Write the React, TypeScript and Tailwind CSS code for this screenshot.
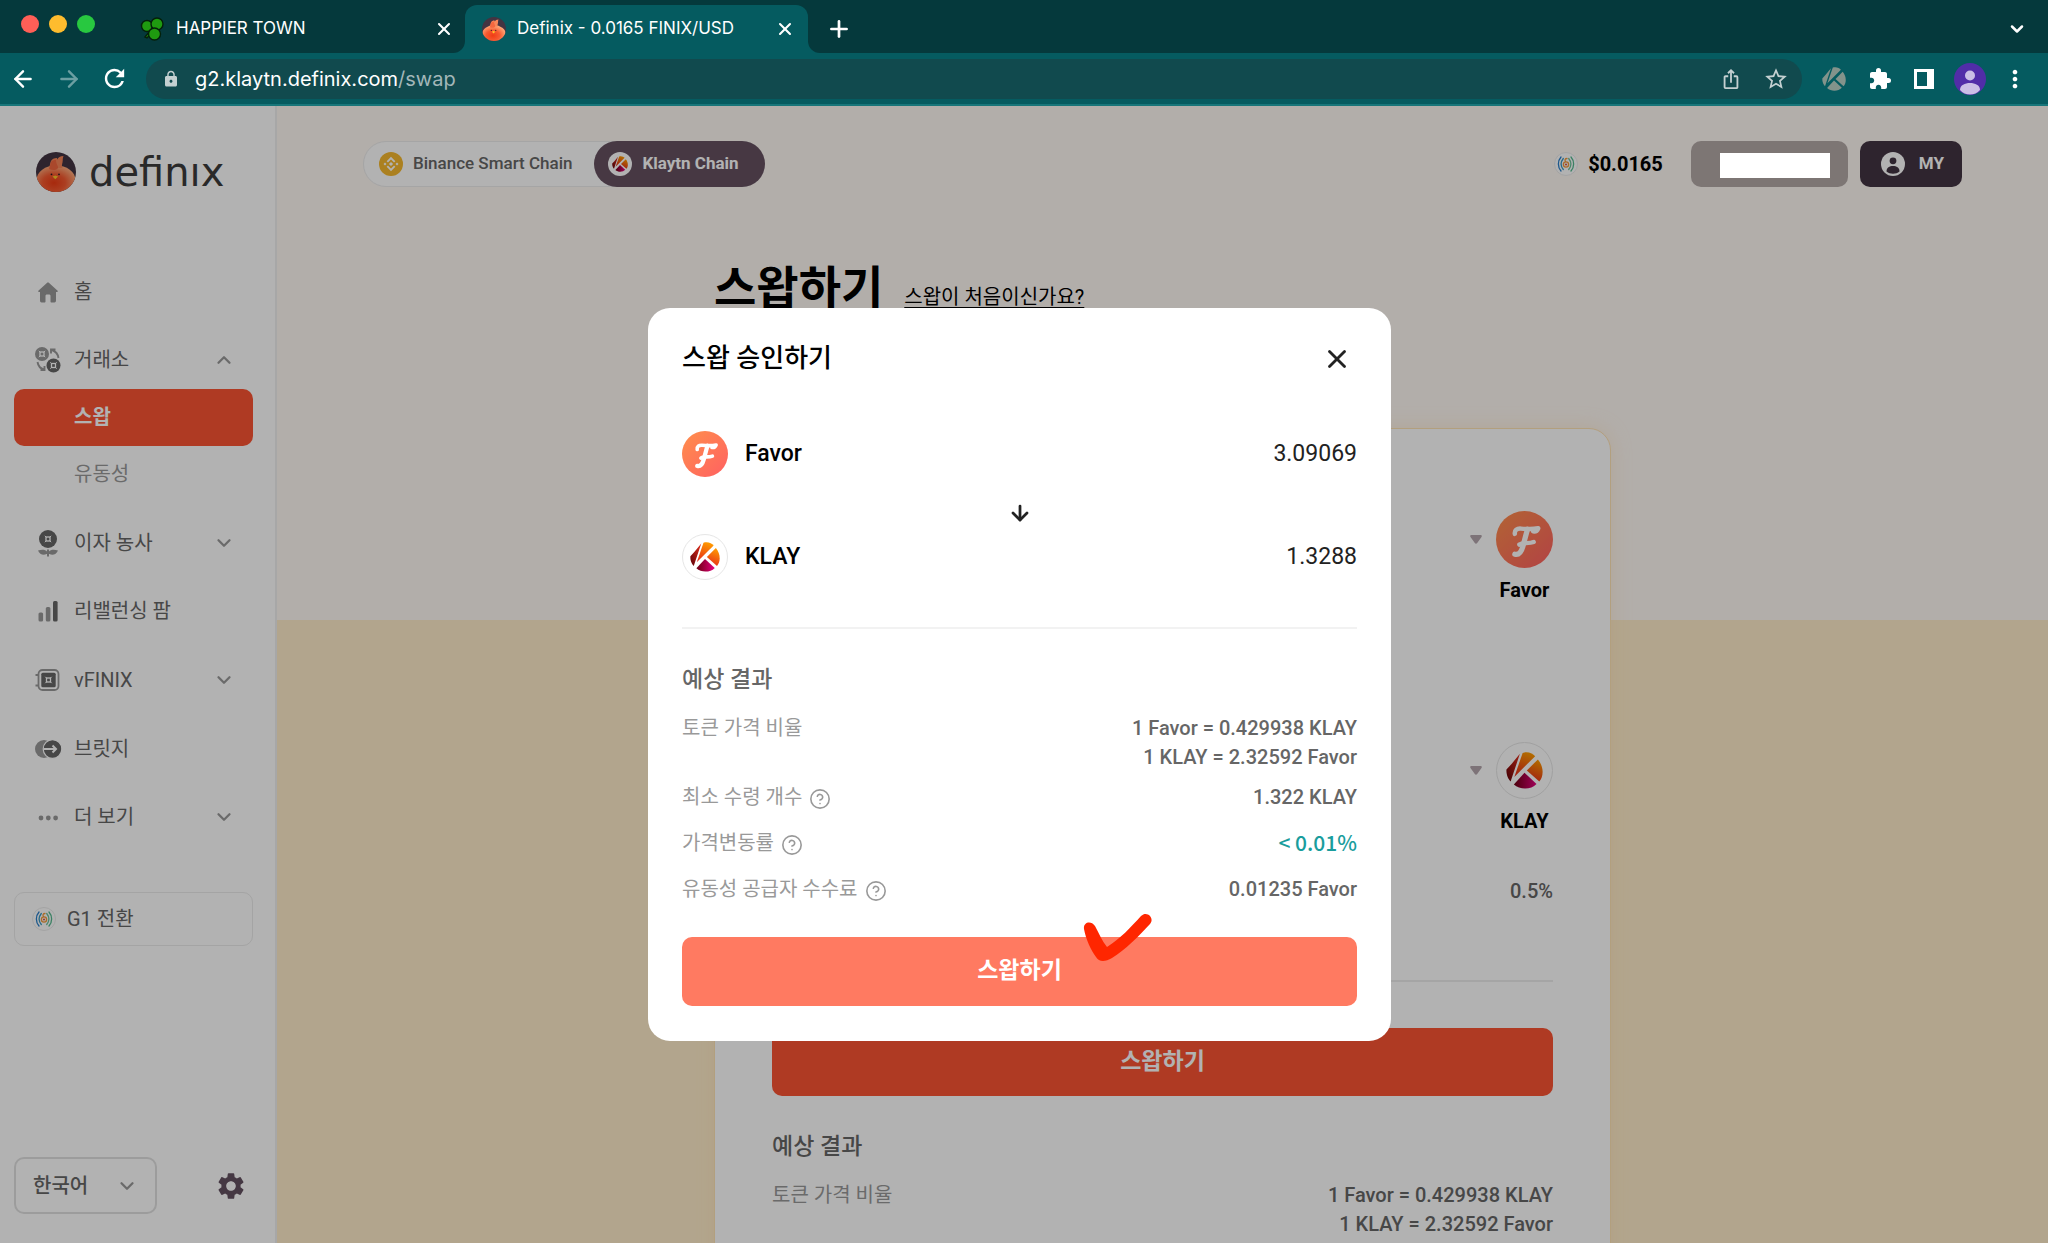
import { useId, useState } from "react";
import type { ReactNode } from "react";
import {
  ArrowDown,
  ArrowLeft,
  ArrowRight,
  ChevronDown,
  ChevronUp,
  CircleHelp,
  Plus,
  X,
} from "lucide-react";
import {
  MdExtension,
  MdLock,
  MdMoreVert,
  MdOutlineIosShare,
  MdRefresh,
  MdSettings,
  MdStarBorder,
} from "react-icons/md";

// Phoenix mark used in the sidebar and the browser tab
function FinixLogo({ className }: { className: string }) {
  const id = useId();
  return (
    <svg viewBox="0 0 40 40" className={className} aria-hidden="true">
      <defs>
        <clipPath id={`${id}c`}>
          <circle cx="20" cy="20" r="20" />
        </clipPath>
        <radialGradient id={`${id}g`} cx="0.45" cy="0.6" r="0.58">
          <stop offset="0" stopColor="#f03c14" />
          <stop offset="0.5" stopColor="#f65a30" />
          <stop offset="1" stopColor="#ffa878" />
        </radialGradient>
      </defs>
      <g clipPath={`url(#${id}c)`}>
        <rect width="40" height="40" fill="#433442" />
        <ellipse cx="20" cy="28" rx="19.500" ry="14.500" fill={`url(#${id}g)`} />
        <path
          d="M12.500 16c1.500-2 1.500-4.500 2.500-7 1-2 3-3 6-3 0 .5.200 1 .2 1.500C22.500 5.500 24 4 27.500 4c-1 2-.5 4-1 6.500-.5 2-1 4 0 5.500z"
          fill="#f88658"
        />
        <path d="M15 10c-1 3-1 5-2 7 4 2 8 1 9-1 .5-2-2-4-2-8-2 0-4 .5-5 2z" fill="#f4673f" />
      </g>
      <circle cx="15.500" cy="22.300" r="0.900" fill="#241a24" />
      <circle cx="23" cy="22.300" r="0.900" fill="#241a24" />
      <path d="M16.500 24.500l2.800-1 2.800 1-2.800 2.800z" fill="#ffc629" />
    </svg>
  );
}

function KlaytnMark({ className, muted = false }: { className: string; muted?: boolean }) {
  const id = useId();
  return (
    <svg viewBox="0 0 40 40" className={className} aria-hidden="true">
      <defs>
        <linearGradient id={`${id}l`} x1="0" y1="1" x2="1" y2="0">
          <stop offset="0" stopColor={muted ? "#83938b" : "#5e0008"} />
          <stop offset="1" stopColor={muted ? "#83938b" : "#e5301c"} />
        </linearGradient>
        <linearGradient id={`${id}r`} x1="0.6" y1="0" x2="0.3" y2="1">
          <stop offset="0" stopColor={muted ? "#83938b" : "#ff9a00"} />
          <stop offset="1" stopColor={muted ? "#83938b" : "#e62a1a"} />
        </linearGradient>
        <linearGradient id={`${id}b`} x1="0" y1="0" x2="1" y2="0">
          <stop offset="0" stopColor={muted ? "#83938b" : "#6d0010"} />
          <stop offset="1" stopColor={muted ? "#83938b" : "#e4007f"} />
        </linearGradient>
      </defs>
      <path d="M15 2L6 13 .500 19C0 25 3 30 5 32z" fill={`url(#${id}l)`} />
      <path d="M18 1C24-1 29 2 31.500 4.500L9 27z" fill={`url(#${id}r)`} />
      <path d="M34.500 8C41 16 41 26 36 32L22.500 20z" fill={`url(#${id}r)`} />
      <path d="M20 22.500L33 34.500C27 41 15 41 8.500 35z" fill={`url(#${id}b)`} />
    </svg>
  );
}

function FavorMark({ className }: { className: string }) {
  const id = useId();
  return (
    <svg viewBox="0 0 56 56" className={className} aria-hidden="true">
      <defs>
        <linearGradient id={`${id}f`} x1="0.1" y1="0.1" x2="0.85" y2="0.9">
          <stop offset="0" stopColor="#ff8a4e" />
          <stop offset="1" stopColor="#ff665f" />
        </linearGradient>
      </defs>
      <circle cx="28" cy="28" r="28" fill={`url(#${id}f)`} />
      <g fill="none" stroke="#fff" strokeWidth="4.400" strokeLinecap="round" strokeLinejoin="round">
        <path d="M18.500 22.500c-.5-3.500 2-5.500 6-5.200 6 .6 11 .9 17-.3-1 2.500-3 3.300-5 3" />
        <path d="M31 18c-1.500 5-3 11-4.500 16.500-1.300 5-3.500 9-8 8" strokeWidth="5.200" />
        <path d="M23 33c3-2.500 9-.5 14-2.500" />
      </g>
    </svg>
  );
}

function KlayToken({ className, mark }: { className: string; mark: string }) {
  return (
    <span className={`flex items-center justify-center rounded-full border border-[#e6e6e6] bg-white ${className}`}>
      <KlaytnMark className={mark} />
    </span>
  );
}

function BinanceMark() {
  return (
    <svg viewBox="0 0 24 24" className="size-6" aria-hidden="true">
      <circle cx="12" cy="12" r="12" fill="#f5b82e" />
      <g fill="none" stroke="#fff" strokeWidth="1.900">
        <path d="M8.300 9.800L12 6.100l3.700 3.700" />
        <path d="M8.300 14.200l3.700 3.700 3.700-3.700" />
      </g>
      <path
        d="M12 9.900l2.100 2.100-2.100 2.100L9.900 12zM6 10.500L7.500 12 6 13.500 4.500 12zM18 10.500l1.500 1.500-1.500 1.500-1.500-1.500z"
        fill="#fff"
      />
    </svg>
  );
}

function FinixCoin() {
  return (
    <svg viewBox="0 0 24 24" className="size-6 shrink-0" aria-hidden="true">
      <circle cx="12" cy="12" r="11.500" fill="#fff" stroke="#eaeaea" />
      <g fill="none" strokeWidth="1.300" strokeLinecap="round">
        <path d="M7 5C3.500 9 3.500 15 7 19" stroke="#2a7fc9" />
        <path d="M9.300 6.500C6.500 10 6.500 14 9.300 17.500" stroke="#3a9ac4" />
        <path d="M17 5c3.500 4 3.500 10 0 14" stroke="#55b98f" />
        <path d="M14.700 6.500c2.800 3.500 2.800 7.500 0 11" stroke="#6cc29a" />
        <path d="M13 6.500c-2 0-2.500 1.500-1.500 3" stroke="#f39a3c" />
        <circle cx="12" cy="12.500" r="2.600" stroke="#f39a3c" />
      </g>
      <circle cx="12" cy="12.500" r="1" fill="#d9483b" />
    </svg>
  );
}

// A round coin with the square hole in the middle
function Coin({ cx, cy, r, fill }: { cx: number; cy: number; r: number; fill: string }) {
  return (
    <g>
      <circle cx={cx} cy={cy} r={r} fill={fill} />
      <rect x={cx - 2} y={cy - 2} width="4" height="4" fill="none" stroke="#fff" strokeWidth="1.300" />
      <path
        d={`M${cx - 3.2} ${cy - 3.2}l1.500 1.500M${cx + 3.2} ${cy - 3.2}l-1.500 1.500M${cx - 3.2} ${cy + 3.2}l1.500-1.500M${cx + 3.2} ${cy + 3.2}l-1.500-1.500`}
        stroke="#fff"
        strokeWidth="1"
      />
    </g>
  );
}

const LIGHT = "#999999";
const DARK = "#666666";

const icons: Record<string, ReactNode> = {
  home: (
    <path
      d="M14 4.500c.5 0 .8.200 1.100.4l8.300 7.600c.8.700.5 1.500-.4 1.500H22v8.500c0 1.100-.6 2-1.600 2H17.500c-.6 0-1-.4-1-1V18c0-1-.6-1.500-1.500-1.500h-2c-.9 0-1.500.5-1.500 1.500v5.500c0 .6-.4 1-1 1H7.600C6.600 24.500 6 23.600 6 22.500V14H5c-.9 0-1.200-.8-.4-1.500l8.300-7.600c.3-.2.6-.4 1.100-.4z"
      fill={LIGHT}
    />
  ),
  exchange: (
    <>
      <Coin cx={8} cy={8} r={7} fill={LIGHT} />
      <Coin cx={19.5} cy={19.5} r={7} fill={DARK} />
      <g fill="none" stroke={LIGHT} strokeWidth="1.900">
        <path d="M18 4c4 1.500 6 4.500 6.500 8M17 7.500V3.500h4.500" />
        <path d="M10 23.500C6 22.500 4 19 3.500 16M10.500 20v4H6.500" />
      </g>
    </>
  ),
  farm: (
    <>
      <Coin cx={14} cy={10} r={9} fill={DARK} />
      <path
        d="M4 21.500c4-1.500 7.500-1 9 1V20.500h2v2c1.500-2 5-2.500 9-1-1.500 4-5.500 5-8.500 3.500H15v2.500h-2V25h-.5C9.500 26.500 5.500 25.500 4 21.500z"
        fill={LIGHT}
      />
    </>
  ),
  chart: (
    <>
      <rect x="4.500" y="15.500" width="4.600" height="9" rx="1.500" fill={LIGHT} />
      <rect x="11.800" y="10" width="4.600" height="14.500" rx="1.500" fill={LIGHT} />
      <rect x="19" y="4" width="4.600" height="20.500" rx="1.500" fill={DARK} />
    </>
  ),
  vault: (
    <>
      <rect x="4.500" y="4" width="20" height="20" rx="4" fill="none" stroke={LIGHT} strokeWidth="1.800" />
      <path d="M1.500 9h3M1.500 19.500h3" stroke={LIGHT} strokeWidth="1.800" />
      <rect x="7.300" y="6.800" width="14.400" height="14.400" rx="1.500" fill={DARK} />
      <Coin cx={14.5} cy={14} r={4} fill={DARK} />
    </>
  ),
  bridge: (
    <>
      <circle cx="10" cy="14" r="9" fill={LIGHT} />
      <circle cx="18.500" cy="14" r="9.300" fill={DARK} stroke="#fff" strokeWidth="1.200" />
      <path d="M9.500 14h12M18.500 10.500l3.500 3.500-3.500 3.500" fill="none" stroke="#fff" strokeWidth="2" />
    </>
  ),
  more: (
    <g fill={LIGHT}>
      <circle cx="7" cy="15" r="2.400" />
      <circle cx="14.300" cy="15" r="2.400" />
      <circle cx="21.600" cy="15" r="2.400" />
    </g>
  ),
};

function MenuItem({ icon, label, arrow }: { icon: string; label: string; arrow?: "up" | "down" }) {
  return (
    <a href="#" className="flex h-[57px] items-center pr-[18px] pl-5 text-xl text-[#666666]">
      <svg viewBox="0 0 28 28" className="mr-3 size-7 shrink-0" aria-hidden="true">
        {icons[icon]}
      </svg>
      <span className="flex-1">{label}</span>
      {arrow === "up" && <ChevronUp className="size-[22px] text-[#999999]" strokeWidth={2.5} />}
      {arrow === "down" && <ChevronDown className="size-[22px] text-[#999999]" strokeWidth={2.5} />}
    </a>
  );
}

function Sidebar() {
  return (
    <aside className="flex w-[277px] shrink-0 flex-col border-r-2 border-[#f0f0f0] bg-white pr-[22px] pl-[14px]">
      <a href="#" className="mt-[42px] flex h-[48px] items-center gap-[13px] pl-[22px] text-[#3c3c3c]">
        <FinixLogo className="size-10 shrink-0" />
        <span className="font-['DejaVu_Sans',sans-serif] text-[40px] leading-[48px]">definıx</span>
      </a>

      <nav className="mt-[67px] flex h-[583px] flex-col justify-between">
        <MenuItem icon="home" label="홈" />
        <div>
          <MenuItem icon="exchange" label="거래소" arrow="up" />
          <a
            href="#"
            className="flex h-[57px] items-center rounded-[10px] bg-[#fb5433] pl-[60px] text-xl font-bold text-white"
          >
            스왑
          </a>
          <a href="#" className="flex h-[57px] items-center pl-[60px] text-xl text-[#999999]">
            유동성
          </a>
        </div>
        <MenuItem icon="farm" label="이자 농사" arrow="down" />
        <MenuItem icon="chart" label="리밸런싱 팜" />
        <MenuItem icon="vault" label="vFINIX" arrow="down" />
        <MenuItem icon="bridge" label="브릿지" />
        <MenuItem icon="more" label="더 보기" arrow="down" />
      </nav>

      <button className="mt-[46px] flex h-[54px] items-center gap-[11px] rounded-[10px] border border-[#ebebeb] pl-[17px] text-xl text-[#666666]">
        <FinixCoin />
        G1 전환
      </button>

      <div className="mt-auto mb-[29px] flex items-center justify-between pr-1.5">
        <div className="relative">
          <select
            aria-label="언어"
            className="h-[57px] w-[143px] appearance-none rounded-[10px] border-2 border-[#e0e0e0] bg-transparent pl-[17px] text-xl font-medium text-[#666666]"
          >
            <option>한국어</option>
            <option>English</option>
          </select>
          <ChevronDown
            className="pointer-events-none absolute top-[18px] right-[19px] size-[22px] text-[#999999]"
            strokeWidth={2.5}
          />
        </div>
        <button aria-label="설정">
          <MdSettings className="size-8 text-[#645161]" />
        </button>
      </div>
    </aside>
  );
}

function TopBar() {
  return (
    <header className="flex h-[46px] items-center justify-between">
      <div className="flex h-[46px] items-center rounded-full border border-[#ececec] bg-white text-[17px] font-medium">
        <button className="flex items-center gap-[10px] pr-[22px] pl-[15px] text-[#666666]">
          <BinanceMark />
          Binance Smart Chain
        </button>
        <button className="-my-px -mr-px flex h-[46px] items-center gap-[10px] rounded-full bg-[#665160] pr-[26px] pl-[14px] font-bold text-white">
          <span className="flex size-6 items-center justify-center rounded-full bg-white">
            <KlaytnMark className="size-4" />
          </span>
          Klaytn Chain
        </button>
      </div>

      <div className="flex items-center">
        <FinixCoin />
        <span className="mr-7 ml-[10px] text-xl font-bold text-black">$0.0165</span>
        <button
          aria-label="지갑"
          className="mr-3 flex h-[46px] w-[157px] items-center justify-center rounded-[10px] bg-[#b3a9a7] pt-0.5 pl-3"
        >
          <span className="relative z-20 h-[25px] w-[110px] bg-white" />
        </button>
        <button className="flex h-[46px] items-center gap-[14px] rounded-[10px] bg-[#433442] px-[18px] pl-[21px] text-[17px] font-bold text-white">
          <svg viewBox="0 0 24 24" className="size-6" aria-hidden="true">
            <circle cx="12" cy="12" r="12" fill="#fff" />
            <circle cx="12" cy="8.800" r="3.400" fill="#433442" />
            <path d="M5.500 19.500c0-4 3-5.500 6.500-5.500s6.500 1.500 6.500 5.500c-3.500 3-9.500 3-13 0z" fill="#433442" />
          </svg>
          MY
        </button>
      </div>
    </header>
  );
}

function TokenPicker({ label, children }: { label: string; children: ReactNode }) {
  return (
    <button className="flex items-start gap-[14px]">
      <svg viewBox="0 0 12 9" className="mt-6 h-[9px] w-3" aria-hidden="true">
        <path d="M1.500 0h9c1.200 0 1.700 1 1 1.900L7.200 8c-.6.900-1.800.9-2.400 0L.500 1.900C-.2 1 .300 0 1.500 0z" fill="#b3a5ac" />
      </svg>
      <span className="flex w-[57px] flex-col items-center">
        {children}
        <span className="mt-2 text-xl leading-7 font-bold text-black">{label}</span>
      </span>
    </button>
  );
}

function RateRow() {
  return (
    <div className="flex justify-between">
      <dt className="text-xl leading-[29px] text-[#999999]">토큰 가격 비율</dt>
      <dd className="text-right text-xl leading-[29px] font-medium text-[#666666]">
        1 Favor = 0.429938 KLAY
        <br />1 KLAY = 2.32592 Favor
      </dd>
    </div>
  );
}

function ResultRow({ label, children }: { label: string; children: ReactNode }) {
  return (
    <div className="flex h-[29px] items-center justify-between">
      <dt className="flex items-center gap-[7px] text-xl leading-[29px] text-[#999999]">
        {label}
        <CircleHelp className="mt-0.5 size-[22px]" strokeWidth={1.75} />
      </dt>
      <dd className="text-xl leading-[29px] font-medium text-[#666666]">{children}</dd>
    </div>
  );
}

function SwapCard() {
  return (
    <section className="mt-[109px] flex flex-col rounded-t-[22px] border border-[#ffe4b5] bg-white px-[57px] pt-[82px] pb-10 shadow-[0_0_20px_rgba(255,222,160,0.35)]">
      <div className="flex justify-end">
        <TokenPicker label="Favor">
          <FavorMark className="size-[57px]" />
        </TokenPicker>
      </div>
      <div className="mt-[138px] flex justify-end">
        <TokenPicker label="KLAY">
          <KlayToken className="size-[57px]" mark="size-[37px]" />
        </TokenPicker>
      </div>
      <p className="mt-[42px] text-right text-xl leading-7 font-medium text-[#666666]">0.5%</p>
      <hr className="mt-[75px] border-t-2 border-[#ededed]" />
      <button className="mt-[46px] h-[68px] rounded-[10px] bg-[#fb5433] text-[23px] font-bold text-white">
        스왑하기
      </button>
      <h2 className="mt-[35px] text-[23px] leading-8 font-medium text-[#666666]">예상 결과</h2>
      <dl className="mt-[18px]">
        <RateRow />
      </dl>
    </section>
  );
}

function ConfirmModal({ onClose }: { onClose: () => void }) {
  return (
    <div className="absolute inset-0 z-10 flex items-center justify-center bg-black/30 pr-[9px]">
      <div
        role="dialog"
        aria-label="스왑 승인하기"
        className="flex w-full max-w-[743px] flex-col rounded-[22px] bg-white px-[34px] pt-[30px] pb-[35px]"
      >
        <div className="flex items-center justify-between">
          <h2 className="text-[26px] leading-10 font-medium text-black">스왑 승인하기</h2>
          <button aria-label="닫기" className="mt-0.5 mr-[5px]" onClick={onClose}>
            <X className="size-[30px] text-[#222222]" strokeWidth={2.25} />
          </button>
        </div>

        <div className="mt-[53px] flex h-[46px] items-center text-[23px] text-[#222222]">
          <FavorMark className="mr-[17px] size-[46px]" />
          <span className="flex-1 font-medium text-black">Favor</span>
          <span>3.09069</span>
        </div>
        <ArrowDown className="mt-6 size-6 self-center text-[#222222]" strokeWidth={2.75} />
        <div className="mt-[9px] flex h-[46px] items-center text-[23px] text-[#222222]">
          <KlayToken className="mr-[17px] size-[46px]" mark="size-[30px]" />
          <span className="flex-1 font-medium text-black">KLAY</span>
          <span>1.3288</span>
        </div>

        <hr className="mt-[47px] border-t-2 border-[#f2f2f2]" />

        <h3 className="mt-[35px] text-[23px] leading-8 font-medium text-[#666666]">예상 결과</h3>
        <dl className="mt-[18px] flex flex-col">
          <RateRow />
          <div className="mt-[11px] flex flex-col gap-[17px]">
            <ResultRow label="최소 수령 개수">1.322 KLAY</ResultRow>
            <ResultRow label="가격변동률">
              <span className="font-['Noto_Sans_CJK_KR',sans-serif] text-[21px] text-[#1a9d9d]">&lt; 0.01%</span>
            </ResultRow>
            <ResultRow label="유동성 공급자 수수료">0.01235 Favor</ResultRow>
          </div>
        </dl>

        <button className="relative mt-[33px] h-[69px] rounded-[10px] bg-[#ff7a61] text-[23px] font-bold text-white">
          스왑하기
          {/* hand-drawn check over the button's top edge */}
          <svg
            viewBox="0 0 72 52"
            className="absolute -top-[25px] left-[59%] h-[52px] w-[72px]"
            aria-hidden="true"
          >
            <path
              d="M4 17c2 11 7 21 12 28 3 5 9 5 16 1C45 38 59 24 70 12c5-6-3-14-9-8C51 15 40 27 27 35 22 29 19 21 15 14c-4-6-12-4-11 3z"
              fill="#ff2600"
            />
          </svg>
        </button>
      </div>
    </div>
  );
}

function BrowserChrome() {
  return (
    <div className="shrink-0 bg-[#055b60] font-[Inter,sans-serif] text-white">
      <div className="flex h-[53px] text-[17px]">
        <div className="flex w-[465px] items-center rounded-br-[12px] bg-[#05393c] pt-[5px] pr-[11px] pl-[21px]">
          <div className="flex gap-[10px] pb-[10px]">
            <span className="size-[18px] rounded-full bg-[#ff5f57]" />
            <span className="size-[18px] rounded-full bg-[#febc2e]" />
            <span className="size-[18px] rounded-full bg-[#28c840]" />
          </div>
          <svg viewBox="0 0 24 24" className="ml-[45px] size-6" aria-hidden="true">
            <g fill="#1f9a10" stroke="#04200a" strokeWidth="1.400">
              <path d="M10 14l-5 6 2 1 5-6z" />
              <ellipse cx="7" cy="9" rx="5.500" ry="5.500" />
              <ellipse cx="17" cy="7" rx="6" ry="6" />
              <ellipse cx="14.500" cy="17" rx="6" ry="6" />
            </g>
          </svg>
          <span className="ml-3 flex-1">HAPPIER TOWN</span>
          <button aria-label="탭 닫기">
            <X className="size-5" strokeWidth={2.5} />
          </button>
        </div>
        <div className="w-[343px] bg-[linear-gradient(to_bottom,#05393c_50%,#055b60_50%)] pt-[5px]">
          <div className="flex h-full items-center rounded-t-[12px] bg-[#055b60] pr-[13px] pl-[17px]">
            <FinixLogo className="size-6" />
            <span className="ml-[11px] flex-1 whitespace-nowrap">Definix - 0.0165 FINIX/USD</span>
            <button aria-label="탭 닫기">
              <X className="size-5" strokeWidth={2.5} />
            </button>
          </div>
        </div>
        <div className="flex flex-1 items-center justify-between rounded-bl-[12px] bg-[#05393c] pt-[5px] pr-[21px] pl-[18px]">
          <button aria-label="새 탭">
            <Plus className="size-[26px]" strokeWidth={2.5} />
          </button>
          <button aria-label="탭 검색">
            <ChevronDown className="size-5" strokeWidth={3} />
          </button>
        </div>
      </div>

      <div className="flex h-[53px] items-center border-b-2 border-[#17767a] pr-[19px] pl-[10px]">
        <button aria-label="뒤로">
          <ArrowLeft className="size-[26px]" strokeWidth={2.25} />
        </button>
        <button aria-label="앞으로" className="ml-[20px] text-[#6c9fa2]">
          <ArrowRight className="size-[26px]" strokeWidth={2.25} />
        </button>
        <button aria-label="새로고침" className="ml-[18px]">
          <MdRefresh className="size-[29px]" />
        </button>
        <div className="ml-[17px] flex h-10 flex-1 items-center rounded-full bg-[#114a4e] pr-[13px] pl-4 text-[#c4d0d1]">
          <MdLock className="size-[18px]" />
          <a href="#" className="ml-[15px] flex-1 text-xl text-[#a3b7b9]">
            <span className="text-white">g2.klaytn.definix.com</span>/swap
          </a>
          <MdOutlineIosShare className="size-[22px]" />
          <MdStarBorder className="ml-[21px] size-[26px]" />
        </div>
        <KlaytnMark className="ml-5 size-6" muted />
        <MdExtension className="ml-[22px] size-6" />
        <svg viewBox="0 0 20 20" className="ml-[22px] size-5" aria-hidden="true">
          <path fillRule="evenodd" d="M0 0h20v20H0zM3 3v14h10V3z" fill="#fff" />
        </svg>
        <svg viewBox="0 0 32 32" className="ml-5 size-8" aria-hidden="true">
          <circle cx="16" cy="16" r="16" fill="#512da8" />
          <circle cx="16" cy="12.500" r="5" fill="#cbbfe6" />
          <path d="M6 27c0-5 5-7 10-7s10 2 10 7c-5 6-15 6-20 0z" fill="#cbbfe6" />
        </svg>
        <button aria-label="메뉴" className="ml-[15px]">
          <MdMoreVert className="size-7" />
        </button>
      </div>
    </div>
  );
}

export default function App() {
  const [open, setOpen] = useState(true);

  return (
    <div className="flex h-screen flex-col overflow-hidden font-[Roboto,'Noto_Sans_CJK_KR',sans-serif]">
      <BrowserChrome />
      <div className="relative flex min-h-0 flex-1">
        <Sidebar />
        <main className="flex-1 overflow-hidden bg-[linear-gradient(to_bottom,#fff9f4_514px,#ffedcb_514px)] px-[86px] pt-[35px]">
          <TopBar />
          <div className="mx-auto mt-[70px] max-w-[897px]">
            <div className="flex items-baseline gap-[21px]">
              <h1 className="text-[46px] leading-[62px] font-bold text-black">스왑하기</h1>
              <a href="#" className="text-xl text-black underline underline-offset-3">
                스왑이 처음이신가요?
              </a>
            </div>
            <SwapCard />
          </div>
        </main>
        {open && <ConfirmModal onClose={() => setOpen(false)} />}
      </div>
    </div>
  );
}
